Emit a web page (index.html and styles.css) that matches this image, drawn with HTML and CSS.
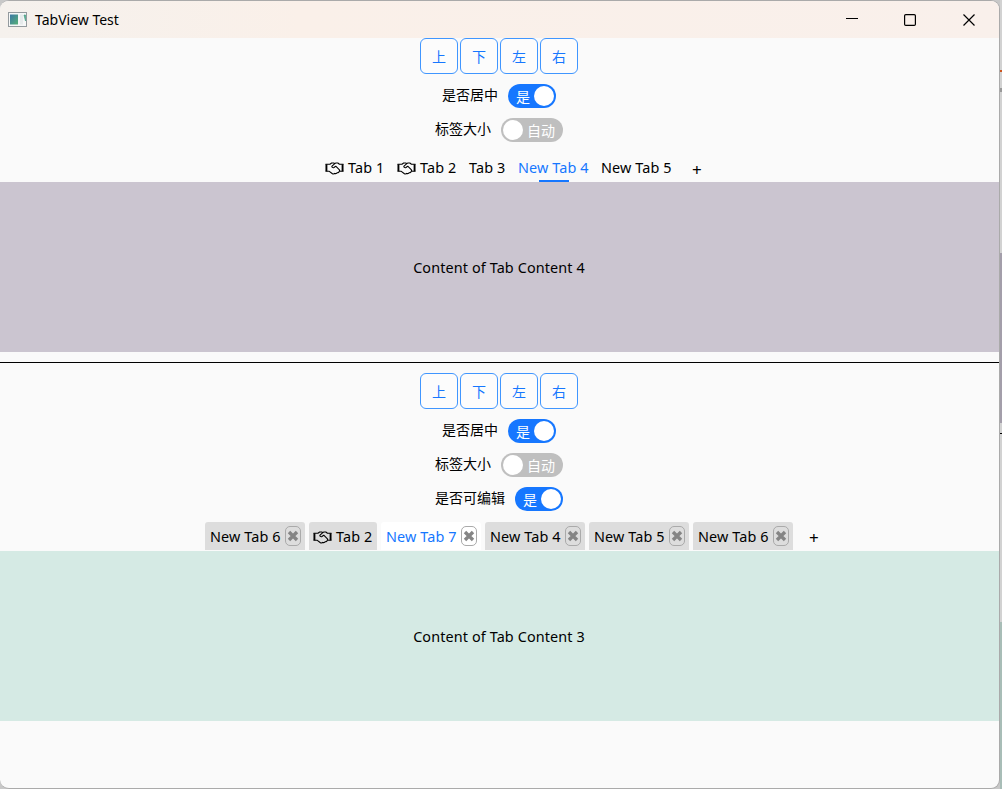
FILE: index.html
```
<!DOCTYPE html>
<html lang="zh-CN">
<head>
<meta charset="utf-8">
<title>TabView Test</title>
<link rel="stylesheet" href="styles.css">
</head>
<body>
<svg class="defs" width="0" height="0">
  <symbol id="hands" viewBox="0 0 20 14">
    <path d="M.5 3h2v7.500h-2zM17.500 3h2v7.500h-2z" fill="#000"/>
    <path d="M.5 3h4.700L7 1.700h2.300l1 .7 1.200-.7h2L15.200 3h4.300M.5 10.500h4l3 2.300c1 .7 2 .6 2.700-.1 1 .5 2 .2 2.500-.8 1 .2 2-.3 2.200-1.400h4.600M10.300 2.400 7.400 5c-.6 1 .8 2.200 2 1.500l1.900-1.400 3.900 3.800c.5.600.3 1-.3 1.600" fill="none" stroke="#000" stroke-width="1.150" stroke-linejoin="round"/>
  </symbol>
  <symbol id="cross" viewBox="0 0 12 12">
    <path d="M2 2l8 8M10 2l-8 8" stroke="#858585" stroke-width="3.400"/>
  </symbol>
</svg>
<div class="desktop">
  <main class="window">
    <header class="titlebar">
      <svg class="app-icon" width="19" height="15" viewBox="0 0 19 15">
        <defs><linearGradient id="g" x1="0" y1="0" x2="1" y2="1"><stop offset="0" stop-color="#3c78a5"/><stop offset="1" stop-color="#55b077"/></linearGradient></defs>
        <rect x=".5" y=".5" width="18" height="14" fill="#f5f7f7" stroke="#949a9e"/>
        <rect x="2" y="2.500" width="8" height="10" fill="url(#g)"/>
        <rect x="12" y="2.500" width="3" height="10" fill="#e5eaeb"/>
        <path d="M16 3h1.500v6z" fill="#4aa287" stroke="#4aa287" stroke-width=".7"/>
      </svg>
      <span class="title">TabView Test</span>
      <svg class="controls" width="130" height="14" viewBox="0 0 130 14" fill="none" stroke="#000" stroke-width="1.200">
        <path d="M1 5.500h12" stroke-width="1"/>
        <rect x="59.600" y="1.600" width="10.800" height="10.800" rx="1.200"/>
        <path d="M118.500 1.500l11 11M129.500 1.500l-11 11"/>
      </svg>
    </header>
    <section class="panel">
      <div class="buttons"><button>上</button><button>下</button><button>左</button><button>右</button></div>
      <div class="option"><span>是否居中</span><span class="switch on">是<i></i></span></div>
      <div class="option"><span>标签大小</span><span class="switch off"><i></i>自动</span></div>
      <nav class="tabs plain">
        <span class="tab icon-tab"><svg><use href="#hands"/></svg>Tab 1</span>
        <span class="tab icon-tab"><svg><use href="#hands"/></svg>Tab 2</span>
        <span class="tab short">Tab 3</span>
        <span class="tab active">New Tab 4</span>
        <span class="tab">New Tab 5</span>
        <span class="add">+</span>
      </nav>
      <div class="content lilac">Content of Tab Content 4</div>
    </section>
    <hr class="divider">
    <section class="panel">
      <div class="buttons"><button>上</button><button>下</button><button>左</button><button>右</button></div>
      <div class="option"><span>是否居中</span><span class="switch on">是<i></i></span></div>
      <div class="option"><span>标签大小</span><span class="switch off"><i></i>自动</span></div>
      <div class="option"><span>是否可编辑</span><span class="switch on">是<i></i></span></div>
      <nav class="tabs cards">
        <span class="tab">New Tab 6<b class="close"><svg><use href="#cross"/></svg></b></span>
        <span class="tab icon-tab"><svg><use href="#hands"/></svg>Tab 2</span>
        <span class="tab active">New Tab 7<b class="close"><svg><use href="#cross"/></svg></b></span>
        <span class="tab">New Tab 4<b class="close"><svg><use href="#cross"/></svg></b></span>
        <span class="tab">New Tab 5<b class="close"><svg><use href="#cross"/></svg></b></span>
        <span class="tab">New Tab 6<b class="close"><svg><use href="#cross"/></svg></b></span>
        <span class="add">+</span>
      </nav>
      <div class="content mint">Content of Tab Content 3</div>
    </section>
  </main>
  <aside class="behind"><i class="orange"></i><i class="arrow"></i><i class="lilac-edge"></i><i class="line"></i><i class="mint-edge"></i></aside>
</div>
</body>
</html>
```
FILE: styles.css
```
* { box-sizing: border-box; }
body {
  margin: 0;
  font: 14.4px/20px "Noto Sans", "Noto Sans CJK SC", sans-serif;
  letter-spacing: 0.12px;
  color: #000;
}
.defs { position: absolute; }
.desktop {
  display: flex;
  width: 1002px;
  height: 789px;
  overflow: hidden;
  background: #c8c8c8;
}
.window {
  width: 1000px;
  height: 789px;
  flex: none;
  overflow: hidden;
  border: 1px solid #aaa;
  border-left: 0;
  border-radius: 9px;
  background: #fafafa;
}
.titlebar {
  display: flex;
  align-items: center;
  height: 37px;
  padding: 0 24px 0 8px;
  background: linear-gradient(90deg, #f5f1ed, #faf0e9 30%, #f9f0eb);
}
.title {
  margin-left: 8px;
  font-size: 14px;
  letter-spacing: 0;
}
.controls { margin-left: auto; }
.buttons {
  display: flex;
  justify-content: center;
  gap: 2px;
  height: 36px;
  margin-right: 1px;
}
.buttons button {
  width: 38px;
  padding: 0;
  border: 1px solid #4096ff;
  border-radius: 6px;
  background: #fcfcfc;
  color: #1677ff;
  font: 14px/20px "Noto Sans CJK SC", sans-serif;
}
.option {
  display: flex;
  justify-content: center;
  align-items: center;
  gap: 10px;
  height: 24px;
  margin: 10px 1px 0 0;
  font: 14px/20px "Noto Sans CJK SC", sans-serif;
  letter-spacing: 0;
}
.option > span:first-child { margin-top: -4px; }
.switch {
  display: flex;
  align-items: center;
  height: 24px;
  border-radius: 12px;
  color: #fff;
  line-height: 26px;
}
.switch i {
  width: 20px;
  height: 20px;
  border-radius: 50%;
  background: #fff;
}
.on {
  width: 48px;
  padding: 0 2px 0 8px;
  gap: 4px;
  background: #1677ff;
}
.off {
  width: 62px;
  padding: 0 8px 0 2px;
  gap: 4px;
  background: #bfbfbf;
}
.tabs { display: flex; }
.tab {
  position: relative;
  display: flex;
  align-items: center;
  white-space: nowrap;
}
.icon-tab svg { width: 19px; height: 14px; margin-right: 4px; }
.add {
  display: flex;
  align-items: center;
  justify-content: center;
  width: 30px;
  font-size: 17px;
}
.plain {
  height: 28px;
  margin-top: 12px;
  padding-left: 319px;
}
.plain .tab { width: 83px; padding-left: 6px; }
.plain .icon-tab { width: 72px; }
.plain .short { width: 49px; padding-left: 6px; }
.plain .active::after {
  content: "";
  position: absolute;
  left: 27px;
  bottom: 0;
  width: 30px;
  height: 2px;
  background: #1677ff;
}
.plain .add { margin-left: 4px; padding-top: 3px; }
.tab.active { color: #1677ff; }
.cards {
  gap: 4px;
  height: 29px;
  margin-top: 11px;
  padding: 0 0 1px 205px;
}
.cards .tab {
  width: 100px;
  padding-left: 5px;
  padding-top: 1px;
  background: #ddd;
  border-radius: 3px 3px 0 0;
}
.cards .icon-tab { width: 68px; padding-left: 4px; }
.cards .tab.active { background: #fff; }
.cards .add { margin-left: 2px; padding-top: 4px; }
.close {
  position: absolute;
  right: 4px;
  top: 4px;
  display: flex;
  align-items: center;
  justify-content: center;
  width: 16px;
  height: 20px;
  border: 1px solid #aaa;
  border-radius: 5px;
}
.close svg { width: 12px; height: 12px; flex: none; }
.content {
  display: flex;
  align-items: center;
  justify-content: center;
  height: 170px;
  padding: 2px 1px 0 0;
}
.lilac { background: #cbc5d0; }
.mint { background: #d5eae4; }
.divider {
  height: 1px;
  margin: 10px 0;
  border: 0;
  background: #000;
}
.behind {
  display: flex;
  flex-direction: column;
  width: 2px;
  background: #d2d2d2;
}
.orange { height: 2px; margin-top: 70px; background: #cc5520; }
.arrow { height: 4px; margin-top: 16px; background: #999; }
.lilac-edge { height: 170px; margin-top: 161px; background: #a39eaa; }
.line { height: 1px; margin-top: 10px; background: #000; }
.mint-edge { height: 167px; margin-top: 188px; background: #a8bdb7; }
```
